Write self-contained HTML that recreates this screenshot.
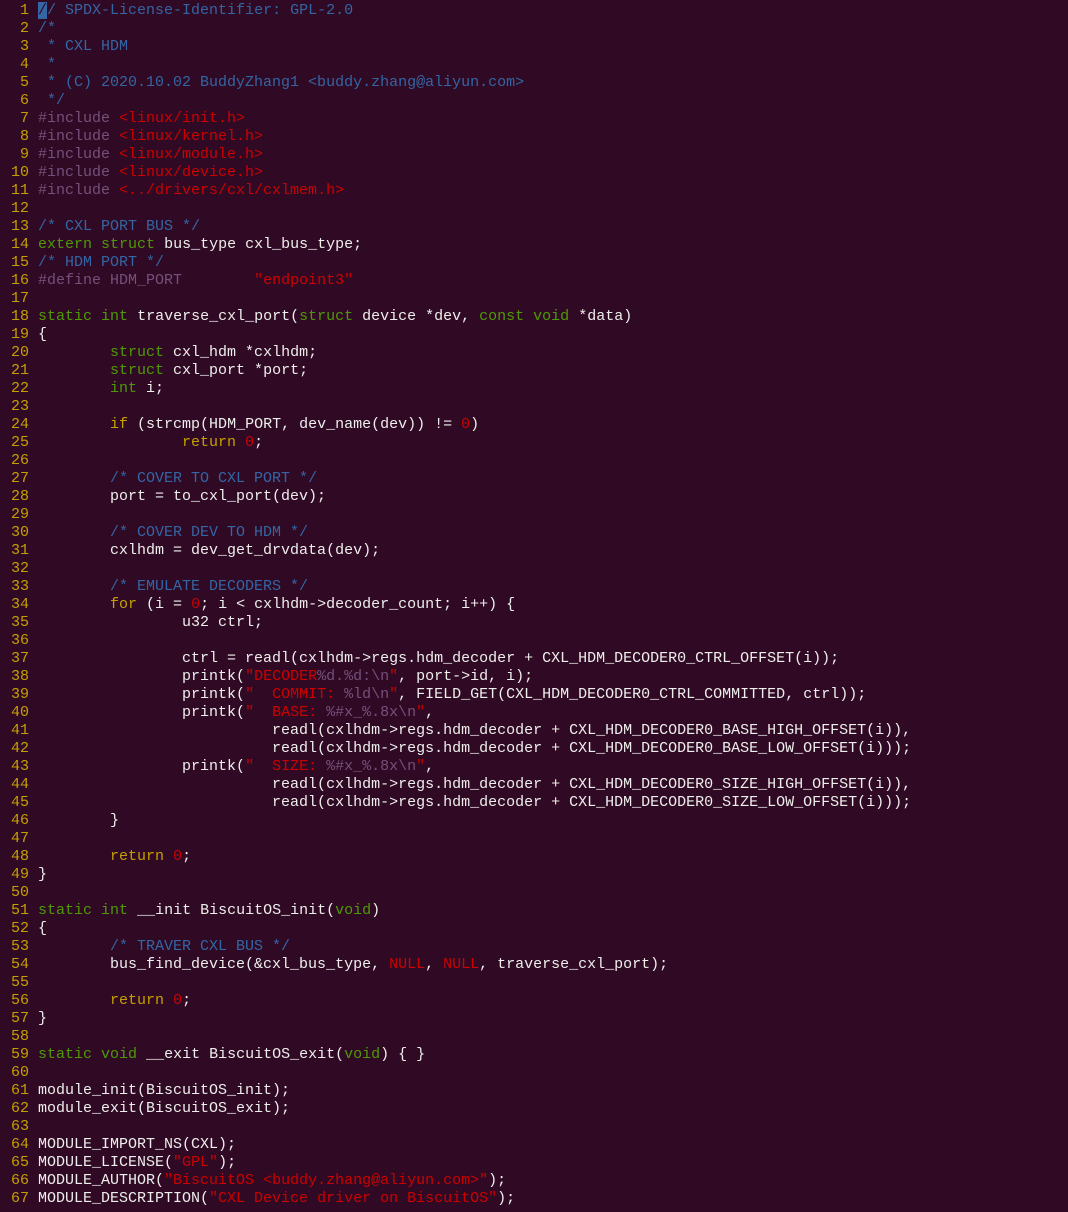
<!DOCTYPE html>
<html><head><meta charset="utf-8"><style>
html,body{margin:0;padding:0;background:#300a24;width:1068px;height:1212px;overflow:hidden}
pre{margin:0;padding:2px 0 0 2px;font-family:"Liberation Mono",monospace;font-size:15px;line-height:18px;color:#eeeeec;tab-size:8;-moz-tab-size:8;white-space:pre}
.n{color:#c4a000}.c{color:#3465a4}.t{color:#4e9a06}.s{color:#c4a000}.p{color:#75507b}.r{color:#cc0000}.f{color:#75507b}
.cur{background:#3465a4;color:#300a24}
</style></head><body><pre><span class="n">  1 </span><span class="c"><span class="cur">/</span>/ SPDX-License-Identifier: GPL-2.0</span>
<span class="n">  2 </span><span class="c">/*</span>
<span class="n">  3 </span><span class="c"> * CXL HDM</span>
<span class="n">  4 </span><span class="c"> *</span>
<span class="n">  5 </span><span class="c"> * (C) 2020.10.02 BuddyZhang1 &lt;buddy.zhang@aliyun.com&gt;</span>
<span class="n">  6 </span><span class="c"> */</span>
<span class="n">  7 </span><span class="p">#include </span><span class="r">&lt;linux/init.h&gt;</span>
<span class="n">  8 </span><span class="p">#include </span><span class="r">&lt;linux/kernel.h&gt;</span>
<span class="n">  9 </span><span class="p">#include </span><span class="r">&lt;linux/module.h&gt;</span>
<span class="n"> 10 </span><span class="p">#include </span><span class="r">&lt;linux/device.h&gt;</span>
<span class="n"> 11 </span><span class="p">#include </span><span class="r">&lt;../drivers/cxl/cxlmem.h&gt;</span>
<span class="n"> 12 </span>
<span class="n"> 13 </span><span class="c">/* CXL PORT BUS */</span>
<span class="n"> 14 </span><span class="t">extern</span> <span class="t">struct</span> bus_type cxl_bus_type;
<span class="n"> 15 </span><span class="c">/* HDM PORT */</span>
<span class="n"> 16 </span><span class="p">#define HDM_PORT        </span><span class="r">"endpoint3"</span>
<span class="n"> 17 </span>
<span class="n"> 18 </span><span class="t">static</span> <span class="t">int</span> traverse_cxl_port(<span class="t">struct</span> device *dev, <span class="t">const</span> <span class="t">void</span> *data)
<span class="n"> 19 </span>{
<span class="n"> 20 </span>        <span class="t">struct</span> cxl_hdm *cxlhdm;
<span class="n"> 21 </span>        <span class="t">struct</span> cxl_port *port;
<span class="n"> 22 </span>        <span class="t">int</span> i;
<span class="n"> 23 </span>
<span class="n"> 24 </span>        <span class="s">if</span> (strcmp(HDM_PORT, dev_name(dev)) != <span class="r">0</span>)
<span class="n"> 25 </span>                <span class="s">return</span> <span class="r">0</span>;
<span class="n"> 26 </span>
<span class="n"> 27 </span>        <span class="c">/* COVER TO CXL PORT */</span>
<span class="n"> 28 </span>        port = to_cxl_port(dev);
<span class="n"> 29 </span>
<span class="n"> 30 </span>        <span class="c">/* COVER DEV TO HDM */</span>
<span class="n"> 31 </span>        cxlhdm = dev_get_drvdata(dev);
<span class="n"> 32 </span>
<span class="n"> 33 </span>        <span class="c">/* EMULATE DECODERS */</span>
<span class="n"> 34 </span>        <span class="s">for</span> (i = <span class="r">0</span>; i &lt; cxlhdm-&gt;decoder_count; i++) {
<span class="n"> 35 </span>                u32 ctrl;
<span class="n"> 36 </span>
<span class="n"> 37 </span>                ctrl = readl(cxlhdm-&gt;regs.hdm_decoder + CXL_HDM_DECODER0_CTRL_OFFSET(i));
<span class="n"> 38 </span>                printk(<span class="r">"DECODER</span><span class="f">%d.%d:\n</span><span class="r">"</span>, port-&gt;id, i);
<span class="n"> 39 </span>                printk(<span class="r">"  COMMIT: </span><span class="f">%ld\n</span><span class="r">"</span>, FIELD_GET(CXL_HDM_DECODER0_CTRL_COMMITTED, ctrl));
<span class="n"> 40 </span>                printk(<span class="r">"  BASE: </span><span class="f">%#x_%.8x\n</span><span class="r">"</span>,
<span class="n"> 41 </span>                          readl(cxlhdm-&gt;regs.hdm_decoder + CXL_HDM_DECODER0_BASE_HIGH_OFFSET(i)),
<span class="n"> 42 </span>                          readl(cxlhdm-&gt;regs.hdm_decoder + CXL_HDM_DECODER0_BASE_LOW_OFFSET(i)));
<span class="n"> 43 </span>                printk(<span class="r">"  SIZE: </span><span class="f">%#x_%.8x\n</span><span class="r">"</span>,
<span class="n"> 44 </span>                          readl(cxlhdm-&gt;regs.hdm_decoder + CXL_HDM_DECODER0_SIZE_HIGH_OFFSET(i)),
<span class="n"> 45 </span>                          readl(cxlhdm-&gt;regs.hdm_decoder + CXL_HDM_DECODER0_SIZE_LOW_OFFSET(i)));
<span class="n"> 46 </span>        }
<span class="n"> 47 </span>
<span class="n"> 48 </span>        <span class="s">return</span> <span class="r">0</span>;
<span class="n"> 49 </span>}
<span class="n"> 50 </span>
<span class="n"> 51 </span><span class="t">static</span> <span class="t">int</span> __init BiscuitOS_init(<span class="t">void</span>)
<span class="n"> 52 </span>{
<span class="n"> 53 </span>        <span class="c">/* TRAVER CXL BUS */</span>
<span class="n"> 54 </span>        bus_find_device(&amp;cxl_bus_type, <span class="r">NULL</span>, <span class="r">NULL</span>, traverse_cxl_port);
<span class="n"> 55 </span>
<span class="n"> 56 </span>        <span class="s">return</span> <span class="r">0</span>;
<span class="n"> 57 </span>}
<span class="n"> 58 </span>
<span class="n"> 59 </span><span class="t">static</span> <span class="t">void</span> __exit BiscuitOS_exit(<span class="t">void</span>) { }
<span class="n"> 60 </span>
<span class="n"> 61 </span>module_init(BiscuitOS_init);
<span class="n"> 62 </span>module_exit(BiscuitOS_exit);
<span class="n"> 63 </span>
<span class="n"> 64 </span>MODULE_IMPORT_NS(CXL);
<span class="n"> 65 </span>MODULE_LICENSE(<span class="r">"GPL"</span>);
<span class="n"> 66 </span>MODULE_AUTHOR(<span class="r">"BiscuitOS &lt;buddy.zhang@aliyun.com&gt;"</span>);
<span class="n"> 67 </span>MODULE_DESCRIPTION(<span class="r">"CXL Device driver on BiscuitOS"</span>);</pre></body></html>
